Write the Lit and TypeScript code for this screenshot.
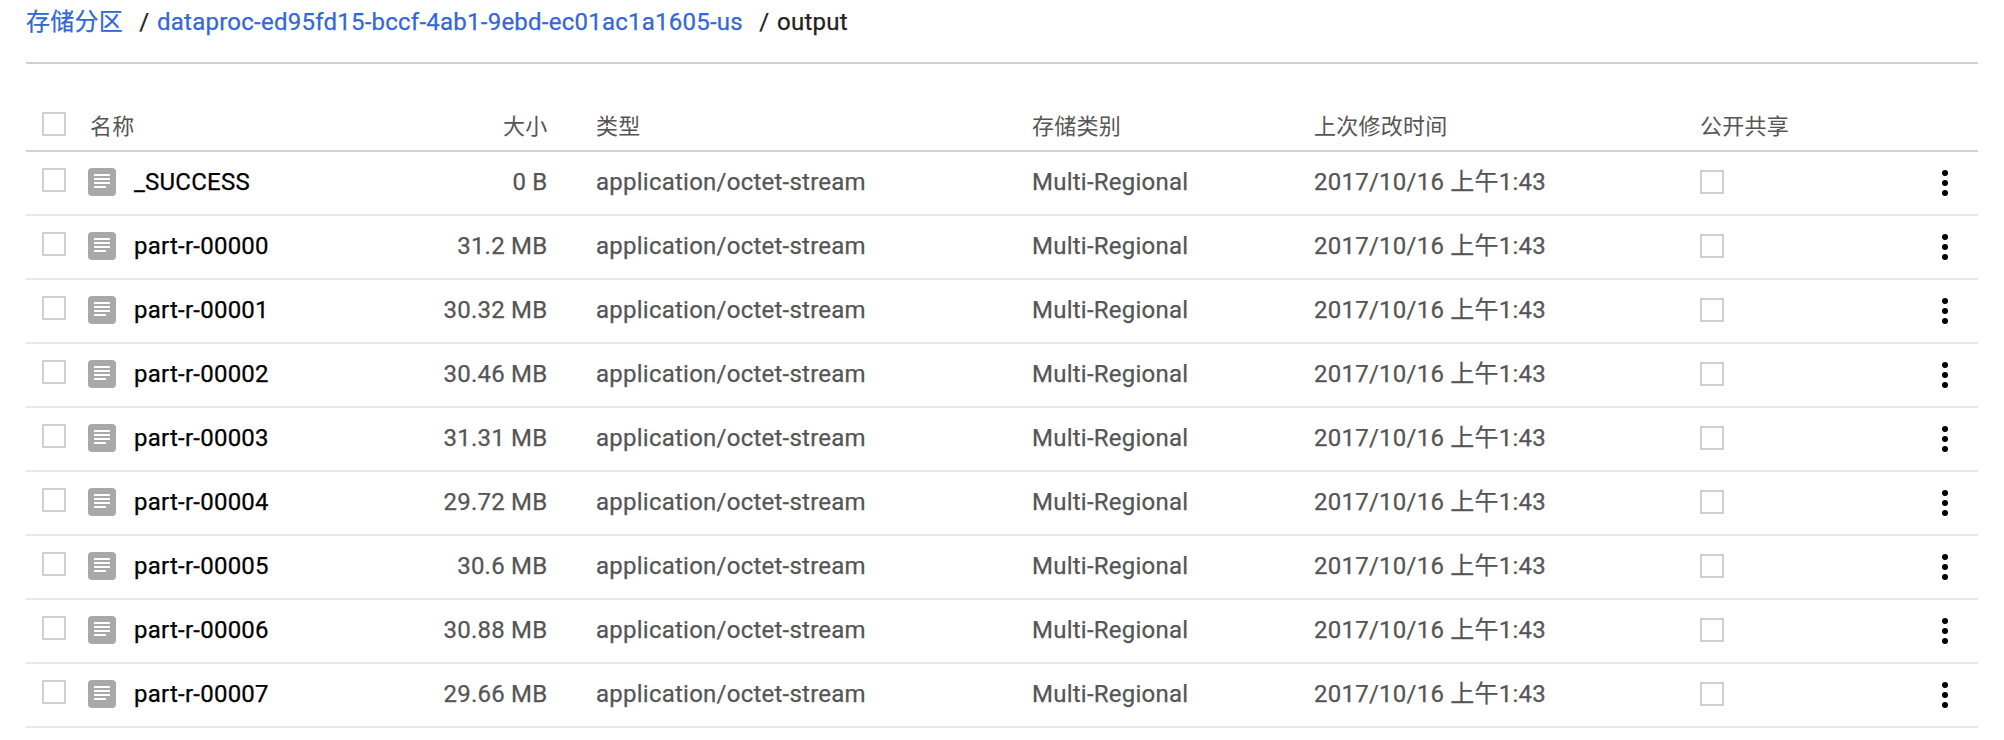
import { LitElement, html, css, svg } from "lit";
import { customElement, property } from "lit/decorators.js";

interface StorageObject {
  name: string;
  size: string;
}

const OBJECTS: StorageObject[] = [
  { name: "_SUCCESS", size: "0 B" },
  { name: "part-r-00000", size: "31.2 MB" },
  { name: "part-r-00001", size: "30.32 MB" },
  { name: "part-r-00002", size: "30.46 MB" },
  { name: "part-r-00003", size: "31.31 MB" },
  { name: "part-r-00004", size: "29.72 MB" },
  { name: "part-r-00005", size: "30.6 MB" },
  { name: "part-r-00006", size: "30.88 MB" },
  { name: "part-r-00007", size: "29.66 MB" },
];

const rowGrid = css`
  .row {
    display: grid;
    grid-template-columns: 62px 46px 413.5px 48.5px 436px 282px 386px 1fr;
    box-sizing: border-box;
    letter-spacing: 0.24px;
    color: #555;
    white-space: nowrap;
  }
  .box {
    box-sizing: border-box;
    width: 24px;
    height: 24px;
    border: 2px solid #d0d0d0;
    background: #fff;
  }
  .select {
    padding-left: 16px;
  }
`;

@customElement("object-row")
export class ObjectRow extends LitElement {
  @property({ attribute: false }) item!: StorageObject;

  static styles = [
    rowGrid,
    css`
      :host {
        display: block;
      }
      .row {
        height: 64px;
        padding-top: 16px;
        border-bottom: 2px solid #e8e8e8;
        line-height: 28px;
        -webkit-text-stroke: 0.25px;
      }
      .icon {
        display: block;
      }
      .name {
        display: flex;
        justify-content: space-between;
      }
      .label {
        color: #000;
      }
      .shared {
        padding-top: 2px;
      }
      .menu {
        display: flex;
        justify-content: flex-end;
        padding: 2px 30px 0 0;
      }
    `,
  ];

  render() {
    return html`
      <div class="row">
        <div class="select"><div class="box"></div></div>
        <svg class="icon" width="28" height="28" viewBox="0 0 28 28">
          <rect width="28" height="28" rx="4" fill="#a8a8a8" />
          ${[6, 10, 14].map((y) => svg`<rect x="6" y=${y} width="16" height="2" fill="#fff" />`)}
          <rect x="6" y="18" width="12" height="2" fill="#fff" />
        </svg>
        <div class="name"><span class="label">${this.item.name}</span><span>${this.item.size}</span></div>
        <span></span>
        <span>application/octet-stream</span>
        <span>Multi-Regional</span>
        <span>2017/10/16 上午1:43</span>
        <div class="name">
          <div class="shared"><div class="box"></div></div>
          <div class="menu">
            <svg width="6" height="26" viewBox="0 0 6 26">
              ${[3, 13, 23].map((y) => svg`<circle cx="3" cy=${y} r="3" />`)}
            </svg>
          </div>
        </div>
      </div>
    `;
  }
}

@customElement("app-root")
export class AppRoot extends LitElement {
  static styles = [
    rowGrid,
    css`
      :host {
        display: block;
        box-sizing: border-box;
        height: 740px;
        padding: 0 26px;
        overflow: hidden;
        background: #fff;
        font-family: Roboto, "Noto Sans CJK SC", sans-serif;
        font-size: 24px;
      }
      .crumbs {
        display: flex;
        box-sizing: border-box;
        height: 64px;
        padding-top: 6px;
        border-bottom: 2px solid #d0d0d0;
        line-height: 32px;
        letter-spacing: 0.24px;
        color: #212121;
        white-space: nowrap;
        -webkit-text-stroke: 0.25px;
      }
      .link {
        color: #3367d6;
      }
      .slash {
        padding: 0 7.5px 0 16.4px;
      }
      .head {
        height: 88px;
        padding-top: 48px;
        border-bottom: 2px solid #d4d4d4;
        font-size: 22px;
        line-height: 30px;
      }
      .title {
        padding-left: 2px;
      }
      .size {
        text-align: right;
      }
    `,
  ];

  render() {
    return html`
      <nav class="crumbs">
        <span class="link">存储分区</span><span class="slash">/</span>
        <span class="link">dataproc-ed95fd15-bccf-4ab1-9ebd-ec01ac1a1605-us</span><span class="slash">/</span>
        <span>output</span>
      </nav>
      <div class="row head">
        <div class="select"><div class="box"></div></div>
        <span class="title">名称</span>
        <div class="size">大小</div>
        <span></span>
        <span>类型</span>
        <span>存储类别</span>
        <span>上次修改时间</span>
        <span>公开共享</span>
      </div>
      ${OBJECTS.map((item) => html`<object-row .item=${item}></object-row>`)}
    `;
  }
}
